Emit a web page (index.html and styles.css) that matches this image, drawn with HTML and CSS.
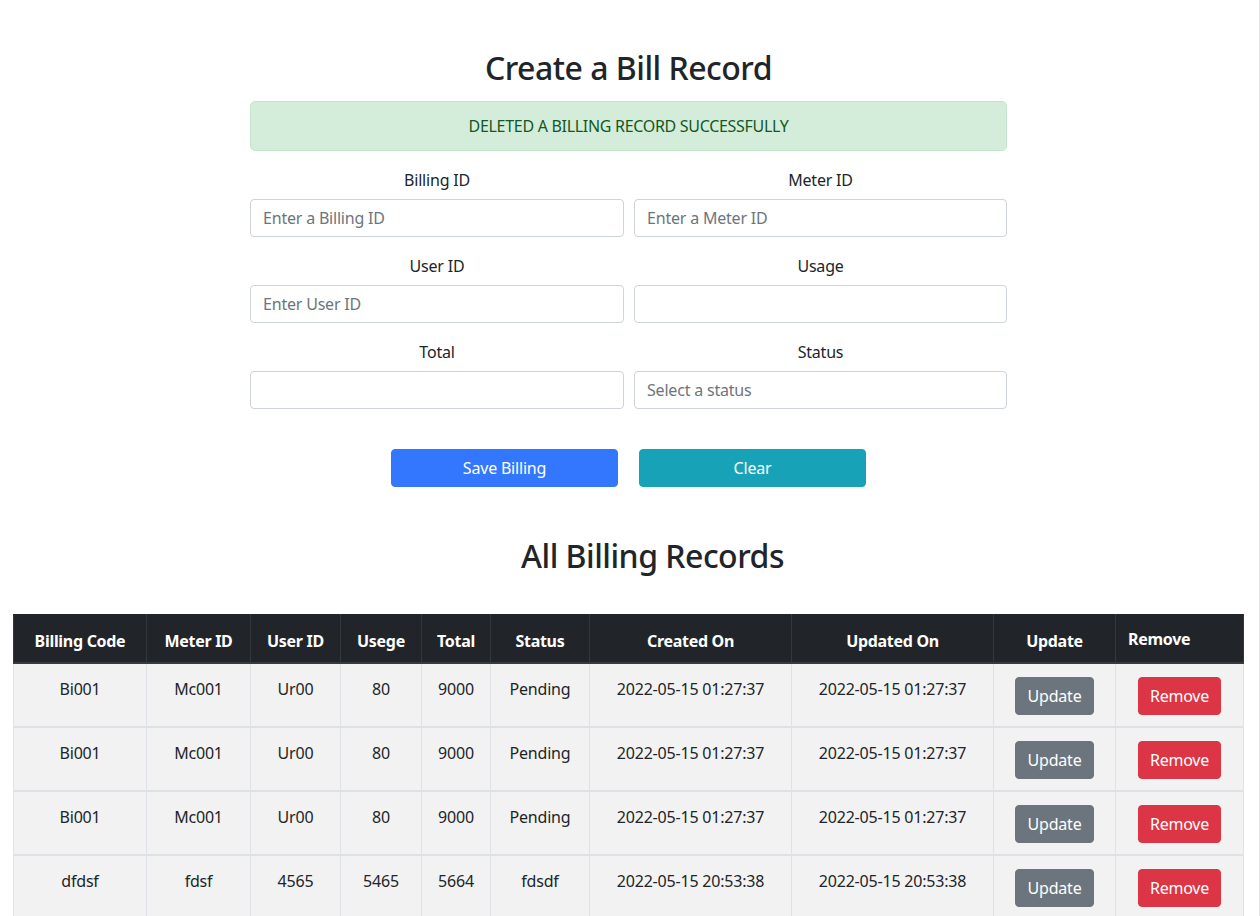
FILE: index.html
```html
<!DOCTYPE html>
<html lang="en">
<head>
<meta charset="utf-8">
<title>Billing</title>
<link rel="stylesheet" href="styles.css">
</head>
<body>
<div class="page">
  <section class="form-wrap">
    <h2 class="title">Create a Bill Record</h2>
    <div class="alert">DELETED A BILLING RECORD SUCCESSFULLY</div>
    <div class="fields">
      <div class="field">
        <label class="label">Billing ID</label>
        <input class="input" type="text" placeholder="Enter a Billing ID">
      </div>
      <div class="field">
        <label class="label">Meter ID</label>
        <input class="input" type="text" placeholder="Enter a Meter ID">
      </div>
      <div class="field">
        <label class="label">User ID</label>
        <input class="input" type="text" placeholder="Enter User ID">
      </div>
      <div class="field">
        <label class="label">Usage</label>
        <input class="input" type="text">
      </div>
      <div class="field">
        <label class="label">Total</label>
        <input class="input" type="text">
      </div>
      <div class="field">
        <label class="label">Status</label>
        <input class="input" type="text" placeholder="Select a status">
      </div>
    </div>
    <div class="actions">
      <button class="btn btn-save">Save Billing</button>
      <button class="btn btn-clear">Clear</button>
    </div>
  </section>

  <h2 class="title title-records">All Billing Records</h2>

  <table class="records">
    <thead>
      <tr>
        <th class="c-code">Billing Code</th>
        <th class="c-meter">Meter ID</th>
        <th class="c-user">User ID</th>
        <th class="c-usage">Usege</th>
        <th class="c-total">Total</th>
        <th class="c-status">Status</th>
        <th class="c-date">Created On</th>
        <th class="c-date">Updated On</th>
        <th class="c-upd">Update</th>
        <th class="c-rem">Remove</th>
      </tr>
    </thead>
    <tbody>
      <tr>
        <td>Bi001</td><td>Mc001</td><td>Ur00</td><td>80</td><td>9000</td><td>Pending</td>
        <td>2022-05-15 01:27:37</td><td>2022-05-15 01:27:37</td>
        <td><button class="btn btn-sm-upd">Update</button></td>
        <td><button class="btn btn-sm-rem">Remove</button></td>
      </tr>
      <tr>
        <td>Bi001</td><td>Mc001</td><td>Ur00</td><td>80</td><td>9000</td><td>Pending</td>
        <td>2022-05-15 01:27:37</td><td>2022-05-15 01:27:37</td>
        <td><button class="btn btn-sm-upd">Update</button></td>
        <td><button class="btn btn-sm-rem">Remove</button></td>
      </tr>
      <tr>
        <td>Bi001</td><td>Mc001</td><td>Ur00</td><td>80</td><td>9000</td><td>Pending</td>
        <td>2022-05-15 01:27:37</td><td>2022-05-15 01:27:37</td>
        <td><button class="btn btn-sm-upd">Update</button></td>
        <td><button class="btn btn-sm-rem">Remove</button></td>
      </tr>
      <tr>
        <td>dfdsf</td><td>fdsf</td><td>4565</td><td>5465</td><td>5664</td><td>fdsdf</td>
        <td>2022-05-15 20:53:38</td><td>2022-05-15 20:53:38</td>
        <td><button class="btn btn-sm-upd">Update</button></td>
        <td><button class="btn btn-sm-rem">Remove</button></td>
      </tr>
    </tbody>
  </table>
</div>
</body>
</html>
```

FILE: styles.css
```css
* { box-sizing: border-box; }

html, body {
  margin: 0;
  padding: 0;
  background: #fff;
}

body {
  font-family: "Noto Sans", "Open Sans", "Liberation Sans", sans-serif;
  font-size: 16px;
  line-height: 1.5;
  color: #212529;
}

.page {
  width: 1260px;
  min-height: 916px;
  border-right: 1px solid #e8e8e8;
  padding: 49px 2px 0 0;
}

.form-wrap {
  width: 757px;
  margin: 0 auto;
}

.title {
  margin: 0 0 14px;
  font-size: 32px;
  font-weight: 500;
  line-height: 1.2;
  text-align: center;
  letter-spacing: -0.5px;
}

.alert {
  padding: 11.5px 16px 12.5px;
  border: 1px solid #c3e6cb;
  border-radius: 5px;
  background: #d4edda;
  color: #155724;
  text-align: center;
  letter-spacing: -0.3px;
}

.fields {
  margin-top: 17px;
  display: grid;
  grid-template-columns: 374px 373px;
  column-gap: 10px;
  row-gap: 17px;
}

.field {
  display: flex;
  flex-direction: column;
}

.label {
  text-align: center;
  margin-bottom: 7px;
  letter-spacing: -0.2px;
}

.input {
  height: 38px;
  padding: 6px 12px;
  border: 1px solid #ced4da;
  border-radius: 4px;
  font-family: inherit;
  font-size: 16px;
  color: #212529;
  background: #fff;
  letter-spacing: -0.2px;
}

.input::placeholder {
  color: #6c757d;
}

.actions {
  margin-top: 40px;
  display: flex;
  justify-content: center;
  gap: 21px;
}

.btn {
  font-family: inherit;
  font-size: 16px;
  line-height: 24px;
  padding: 6px 12px;
  border: 1px solid transparent;
  border-radius: 4px;
  color: #fff;
  cursor: pointer;
  letter-spacing: -0.2px;
}

.btn-save {
  width: 227px;
  background: #3377ff;
  border-color: #3377ff;
}

.btn-clear {
  width: 227px;
  background: #17a2b8;
  border-color: #17a2b8;
}

.title-records {
  margin: 50px 0 38px;
  padding-left: 48px;
}

.records {
  margin-left: 13px;
  width: 1230px;
  border-collapse: collapse;
  table-layout: fixed;
  border: 1px solid #dee2e6;
}

.records th {
  background: #212529;
  color: #fff;
  font-weight: 700;
  text-align: center;
  vertical-align: top;
  padding: 14px 4px 9px;
  border-top: 1px solid #212529;
  border-left: 1px solid #32383e;
  border-right: 1px solid #32383e;
  border-bottom: 2px solid #373b3e;
  letter-spacing: -0.3px;
}

.records th.c-rem {
  text-align: left;
  padding: 12px 4px 11px 12px;
}

.c-code { width: 133px; }
.c-meter { width: 104px; }
.c-user { width: 90px; }
.c-usage { width: 81px; }
.c-total { width: 69px; }
.c-status { width: 99px; }
.c-date { width: 202px; }
.c-upd { width: 122px; }
.c-rem { width: 128px; }

.records td {
  background: #f2f2f2;
  text-align: center;
  vertical-align: top;
  padding: 13px 4px 11px;
  border-left: 1px solid #dee2e6;
  border-right: 1px solid #dee2e6;
  border-bottom: 2px solid #dee2e6;
  letter-spacing: -0.2px;
}

.btn-sm-upd {
  background: #6c757d;
  border-color: #6c757d;
}

.btn-sm-rem {
  background: #dc3545;
  border-color: #dc3545;
  padding: 6px 11px;
}
```
